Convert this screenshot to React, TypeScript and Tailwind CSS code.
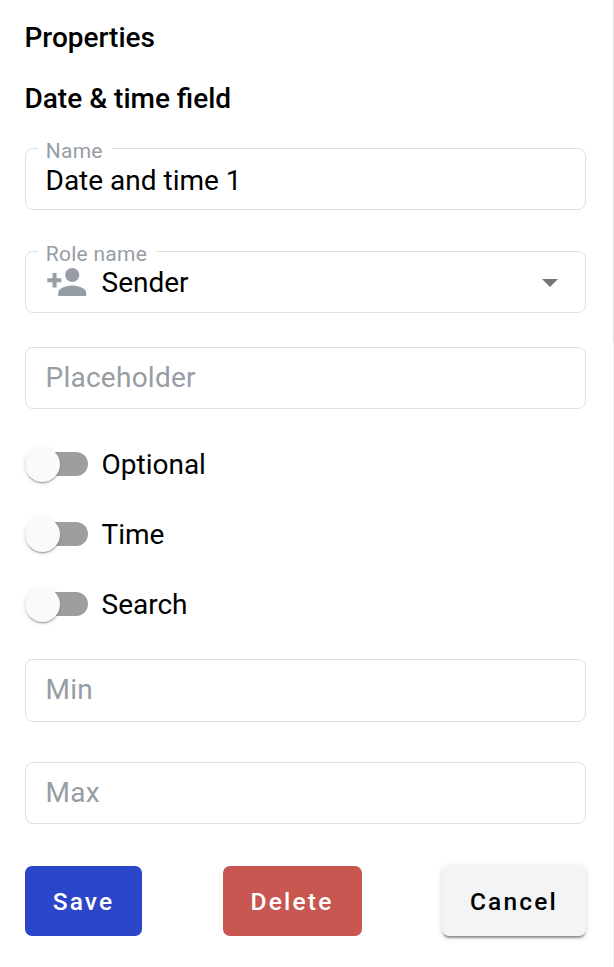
import type { ReactNode } from "react";

function Outline({ label, className, children }: { label?: string; className: string; children: ReactNode }) {
  return (
    <div className={`relative w-[561px] rounded-lg border border-[#e0e0e0] pl-[19.5px] text-[28px] leading-[42px] ${className}`}>
      {label && (
        <span className="absolute left-[12px] top-[-12px] bg-white pl-[7.75px] pr-[9px] text-[21px] leading-[28px] tracking-[0.26px] text-[#969da5]">
          {label}
        </span>
      )}
      {children}
    </div>
  );
}

function Toggle({ label }: { label: string }) {
  return (
    <label className="flex h-[70px] items-center">
      <span className="flex h-6 w-[63px] items-center rounded-full bg-[#9e9e9e]">
        <span className="size-[35px] shrink-0 rounded-full bg-[#fafafa] shadow-[0_2px_2px_-1px_rgba(0,0,0,0.4),0_1px_5px_rgba(0,0,0,0.1)]" />
      </span>
      <span className="ml-[13.5px] pt-[2px] text-[28px] leading-[42px]">{label}</span>
    </label>
  );
}

export default function App() {
  return (
    <div className="flex h-[967px] w-[614px] bg-white font-[Roboto,sans-serif] text-black">
      <main className="flex w-[613px] flex-col pl-[25px]">
        <h1 className="-ml-[0.5px] mt-[17px] text-[28px] font-medium leading-[42px]">Properties</h1>
        <h2 className="-ml-[0.5px] mt-[19px] text-[28px] font-medium leading-[42px]">Date &amp; time field</h2>

        <Outline label="Name" className="mt-[28px] h-[62px] pt-[11px]">
          Date and time 1
        </Outline>
        <Outline label="Role name" className="mt-[41px] flex h-[62px] pt-[10px]">
          <svg viewBox="0 0 24 24" className="-mt-px h-[42px] w-[42px] text-[#969da5]" fill="currentColor">
            <path d="M15 12c2.21 0 4-1.79 4-4s-1.79-4-4-4-4 1.79-4 4 1.79 4 4 4zM6.05 9.9V6.9H3.75v3H.75v2.25h3v3h2.3v-2.3h0v-.7h2.7V9.9zM15 14c-2.67 0-8 1.34-8 4v2h16v-2c0-2.66-5.33-4-8-4z" />
          </svg>
          <span className="ml-[14px]">Sender</span>
          <svg viewBox="0 0 16 8" className="ml-auto mr-[27px] mt-[17px] h-2 w-4" fill="#757575">
            <path d="M0 0h16L8 8z" />
          </svg>
        </Outline>
        <Outline className="mt-[34px] h-[62px] pt-[9px] text-[#969da5]">
          <span className="tracking-[0.25px]">Placeholder</span>
        </Outline>

        <div className="mt-5">
          <Toggle label="Optional" />
          <Toggle label="Time" />
          <Toggle label="Search" />
        </div>

        <Outline className="mt-5 h-[63px] pt-[9px] text-[#969da5]">
          <span className="tracking-[0.25px]">Min</span>
        </Outline>
        <Outline className="mt-10 h-[62px] pt-[9px] text-[#969da5]">
          <span className="tracking-[0.25px]">Max</span>
        </Outline>

        <div className="mt-[42px] flex w-[561px] justify-between text-[24.5px] font-medium tracking-[2.19px]">
          <button className="h-[70px] w-[117px] rounded-[7px] bg-[#2b46c8] pt-[2px] text-white">Save</button>
          <button className="h-[70px] w-[139px] rounded-[7px] bg-[#c85751] pt-[2px] text-white">Delete</button>
          <button className="h-[70px] w-[144px] rounded-[7px] bg-[#f3f4f6] pt-[2px] shadow-[0_3px_2px_-1px_rgba(0,0,0,0.38),0_1px_6px_rgba(0,0,0,0.14)]">
            Cancel
          </button>
        </div>
      </main>
      <div className="flex w-px flex-col bg-[#f0f0f0]">
        <div className="h-[343px] bg-[#e2e2e2]" />
      </div>
    </div>
  );
}
